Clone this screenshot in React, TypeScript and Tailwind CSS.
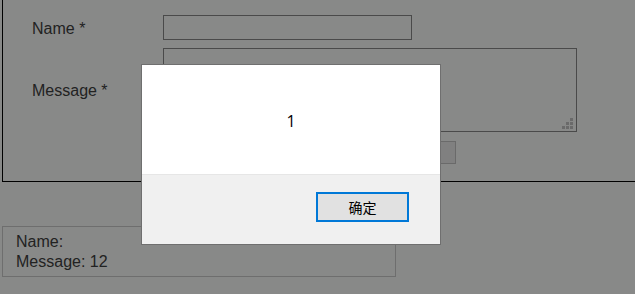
export default function App() {
  return (
    <div className="relative w-[635px] h-[294px] overflow-hidden bg-[#888988] font-['Liberation_Sans',Arial,sans-serif] text-[#222]">
      {/* form (dimmed behind the alert) */}
      <div className="-mt-[10px] ml-[2px] w-[700px] border border-black pt-[24px] pb-[17px] pl-[29px]">
        <div className="grid grid-cols-[131px_1fr] gap-y-[8px]">
          <div className="flex items-center text-[16px]">
            <span className="relative top-[1px]">Name *</span>
          </div>
          <div className="h-[25px] w-[249px] border border-[#4a4a4a]" />
          <div className="flex items-center text-[16px]">
            <span className="relative top-[1px]">Message *</span>
          </div>
          <div className="relative h-[84px] w-[414px] border border-[#4a4a4a]">
            <svg className="absolute right-[3px] bottom-[2px]" width="11" height="11" viewBox="0 0 11 11">
              <g fill="#6a6a6a">
                <rect x="8" y="0" width="3" height="3" />
                <rect x="4" y="4" width="3" height="3" />
                <rect x="8" y="4" width="3" height="3" />
                <rect x="0" y="8" width="3" height="3" />
                <rect x="4" y="8" width="3" height="3" />
                <rect x="8" y="8" width="3" height="3" />
              </g>
            </svg>
          </div>
          <div />
          <div className="pl-[233px]">
            <button className="h-[23px] w-[60px] border border-[#6a6a6a] bg-[#808080] pr-[14px] text-right text-[13px] text-[#1c3a55]">
              Send
            </button>
          </div>
        </div>
      </div>

      {/* output */}
      <div className="mt-[44px] ml-[2px] w-[394px] h-[51px] border border-[#6e6e6e] pl-[13px] pt-[5px] text-[16px] leading-[20px]">
        <div>Name:</div>
        <div>Message: 12</div>
      </div>

      {/* alert dialog */}
      <div className="absolute left-[141px] top-[64px] flex h-[181px] w-[300px] flex-col border border-[#6f6f6f] bg-white text-black">
        <div className="flex h-[109px] items-center justify-center pt-[2px] font-['Open_Sans',sans-serif] text-[16px]">1</div>
        <div className="flex flex-1 justify-end border-t border-[#e6e6e6] bg-[#f0f0f0] pt-[17px] pr-[31px]">
          <button className="h-[30px] w-[93px] border-2 border-[#0078d7] bg-[#e1e1e1] font-['Noto_Sans_CJK_SC',sans-serif] text-[14px] leading-none text-black">
            确定
          </button>
        </div>
      </div>
    </div>
  );
}
